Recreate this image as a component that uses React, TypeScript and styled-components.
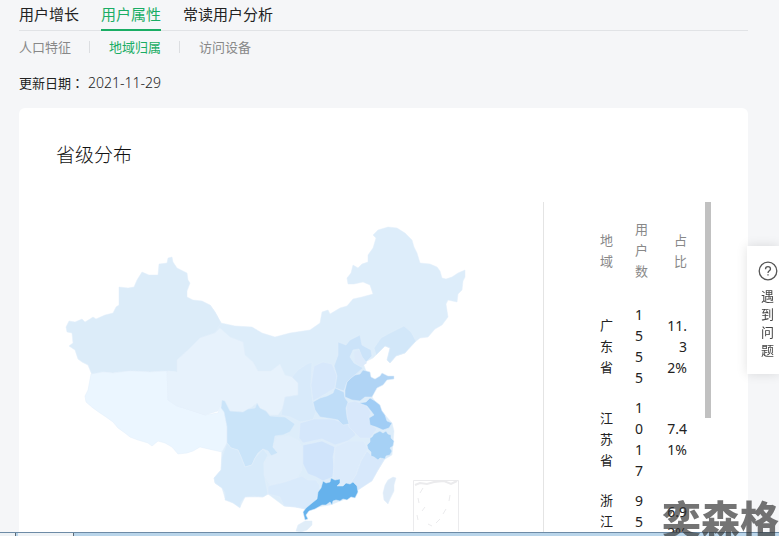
import React from "react";
import styled, { createGlobalStyle } from "styled-components";

const GlobalStyle = createGlobalStyle`
  * { box-sizing: border-box; }
  body {
    margin: 0;
    background: #f5f6f8;
    color: #353535;
    font-family: "Noto Sans", "Noto Sans CJK SC", sans-serif;
    font-weight: 400;
    font-size: 13px;
  }
`;

const Page = styled.div`
  display: flex;
  flex-direction: column;
  height: 100vh;
  overflow: hidden;
`;

const Content = styled.main`
  display: flex;
  flex-direction: column;
  flex: 1;
  min-height: 0;
  overflow: hidden;
  padding: 0 31px 0 19px;
`;

const Tabs = styled.nav`
  display: flex;
  flex: none;
  gap: 22px;
  height: 31px;
  box-shadow: inset 0 -1px #e1e3e6;
`;

const Tab = styled.a<{ $active?: boolean }>`
  height: 31px;
  line-height: 28px;
  font-size: 15px;
  text-decoration: none;
  white-space: nowrap;
  color: ${(p) => (p.$active ? "#1aad64" : "#222")};
  border-bottom: 2px solid ${(p) => (p.$active ? "#1aad64" : "transparent")};
`;

const SubTabs = styled.nav`
  display: flex;
  flex: none;
  align-items: center;
  height: 32px;
`;

const SubTab = styled.a<{ $active?: boolean }>`
  line-height: 20px;
  text-decoration: none;
  white-space: nowrap;
  color: ${(p) => (p.$active ? "#1aad64" : "#888")};
`;

const SubDivider = styled.span`
  width: 1px;
  height: 12px;
  margin: 0 19px 0 18px;
  background: #dcdee1;
`;

const Updated = styled.p`
  display: flex;
  flex: none;
  align-items: center;
  height: 38px;
  margin: 0 0 7px;
  color: #222;
`;

const UpdatedLabel = styled.span`
  width: 69px;
  font-family: "Noto Sans CJK TC", sans-serif;
`;

const UpdatedDate = styled.time`
  font-size: 14px;
  font-weight: 300;
`;

const Card = styled.section`
  display: flex;
  flex-direction: column;
  flex: 1;
  min-height: 0;
  padding: 33px 37px 0;
  border-radius: 6px 6px 0 0;
  background: #fff;
`;

const Title = styled.h2`
  flex: none;
  margin: 0 0 33px;
  font-size: 19px;
  font-weight: 300;
  line-height: 28px;
  color: #111;
`;

const Split = styled.div`
  display: flex;
  flex: 1;
  min-height: 0;
`;

const MapPane = styled.div`
  flex: 1;
  min-width: 0;
`;

const MapSvg = styled.svg`
  display: block;
  width: 100%;
`;

const ListPane = styled.div`
  display: flex;
  flex: none;
  justify-content: space-between;
  width: 168px;
  padding-left: 56px;
  overflow: hidden;
  border-left: 1px solid #e4e4e4;
`;

const RegionTable = styled.table`
  table-layout: fixed;
  align-self: flex-start;
  width: 87px;
  border-collapse: collapse;
  line-height: 21px;
  color: #222;
`;

const HeadCell = styled.th<{ $right?: boolean }>`
  padding: 17px 0 18px;
  font-weight: 400;
  color: #888;
  text-align: ${(p) => (p.$right ? "right" : "left")};
`;

const Cell = styled.td<{ $right?: boolean; $number?: boolean }>`
  padding: 4px 0 5px;
  font-size: ${(p) => (p.$number ? "14px" : "13px")};
  text-align: ${(p) => (p.$right ? "right" : "left")};
`;

const Column = styled.col<{ $width: number }>`
  width: ${(p) => p.$width}px;
`;

const ScrollThumb = styled.div`
  width: 6px;
  height: 216px;
  background: #c1c1c1;
`;

const Help = styled.button`
  position: fixed;
  top: 246px;
  right: 0;
  display: flex;
  flex-direction: column;
  align-items: center;
  width: 32px;
  height: 128px;
  padding: 15px 0 0 9px;
  border: 0;
  background: #fff;
  box-shadow: 0 0 12px rgba(0, 0, 0, 0.12);
  color: #444;
  font: inherit;
  line-height: 18px;
`;

const HelpIcon = styled.svg`
  flex: none;
  width: 20px;
  height: 20px;
  margin-bottom: 6px;
`;

const HelpText = styled.span`
  width: 13px;
`;

const Watermark = styled.div`
  position: fixed;
  right: 0;
  bottom: 0;
  height: 38px;
  line-height: 38px;
  font-family: "Noto Sans CJK SC", sans-serif;
  font-size: 39px;
  font-weight: 900;
  color: #333;
  opacity: 0.68;
  white-space: nowrap;
  pointer-events: none;
`;

const Taskbar = styled.footer`
  display: flex;
  flex: none;
  gap: 2px;
  height: 4px;
  border-top: 1px solid #6d8ba6;
  background: #b9d5ea;
`;

const TaskItem = styled.span<{ $width: number }>`
  width: ${(p) => p.$width}px;
  border: solid #5d6a75;
  border-width: 0 1px 0 0;
  background: #eef2f5;
`;

type Region = { name: string; fill: string; points: string };

const regions: Region[] = [
  { name: "mainland", fill: "#ddedfa", points: "210,305 215,312 221,323 235,326 252,327 262,333 275,337 290,333 310,330 320,323 322,312 328,310 330,314 340,308 347,306 353,299 362,297 373,294 370,285 363,282 354,284 348,284 347,278 351,273 353,265 358,268 362,264 368,262 368,255 373,248 376,238 373,235 378,230 388,227 397,228 405,233 412,240 414,247 417,253 420,263 430,264 437,267 440,271 442,278 446,279 452,277 458,273 465,270 465,277 463,281 462,290 458,294 457,302 448,300 446,304 448,317 442,325 435,329 428,337 420,338 410,346 405,353 396,356 390,363 387,360 390,348 385,346 373,358 363,363 366,371 371,377 372,397 385,415 392,423 394,431 392,455 385,459 378,470 372,480 358,490 343,500 330,505 305,509 295,507 284,506 268,494 263,497 245,497 240,507 225,498 222,488 215,483 214,478 221,470 222,447 225,400 177,372 177,360 188,335" },
  { name: "xinjiang", fill: "#dcecf9", points: "67,332 66,327 69,321 75,322 82,319 85,322 90,319 93,317 96,319 105,315 113,313 116,307 119,305 119,287 128,288 134,287 137,280 142,272 149,275 158,275 159,264 167,263 168,258 172,257 173,262 177,268 187,273 188,280 190,283 187,291 187,297 193,300 202,301 210,305 215,312 221,323 215,333 200,338 188,350 177,360 177,372 168,371 150,372 130,371 113,373 103,372 92,375 88,365 82,362 78,359 75,350 69,346 73,343 72,333" },
  { name: "tibet", fill: "#ebf6ff", points: "91,374 103,372 113,373 130,371 150,372 167,371 168,400 177,406 190,410 205,415 218,413 222,402 227,417 227,443 222,452 213,450 200,447 193,451 187,453 178,454 172,447 165,443 158,441 152,446 148,443 138,440 130,437 125,433 118,428 113,422 106,417 100,413 93,408 86,402 85,396 88,390" },
  { name: "qinghai-gansu", fill: "#e7f2fc", points: "177,372 177,360 188,350 200,338 215,333 220,328 230,337 243,342 245,355 253,362 258,371 271,371 280,364 285,375 292,377 298,383 298,395 285,397 283,408 278,415 270,415 265,410 260,409 257,403 252,407 243,412 230,411 222,402 218,411 205,415 190,410 177,406 168,400 167,371" },
  { name: "ningxia-shaanxi", fill: "#d8eafa", points: "298,370 307,364 312,362 311,385 313,402 316,412 313,420 300,422 290,417 281,415 285,397 298,395 298,383 292,377" },
  { name: "shanxi", fill: "#d7e8fb", points: "314,366 323,362 332,364 337,376 335,388 327,393 313,401 311,385" },
  { name: "hebei", fill: "#cbe3f9", points: "338,342 346,345 350,340 360,335 362,345 371,350 372,356 366,362 362,357 359,349 353,350 350,357 354,363 363,368 355,375 347,382 344,391 335,388 337,376 334,366 338,355" },
  { name: "liaoning", fill: "#d2e7f9", points: "374,348 381,338 388,334 398,329 404,326 411,332 416,341 405,353 396,356 390,363 387,360 390,348 385,346 376,355" },
  { name: "sichuan", fill: "#cae4f9", points: "222,400 225,401 230,411 243,412 248,409 255,408 257,403 260,408 266,411 270,416 285,417 295,424 290,432 283,435 275,436 273,447 278,453 272,457 268,451 263,449 258,453 255,458 252,465 245,467 241,457 238,450 231,448 227,443 227,427 224,412 221,408" },
  { name: "yunnan", fill: "#d7eafa", points: "227,443 231,448 238,450 241,457 245,467 252,465 255,458 263,449 268,455 264,463 265,479 268,494 263,497 254,496 245,497 241,502 240,508 233,503 225,500 225,493 222,488 215,483 214,478 221,470 222,457" },
  { name: "guizhou", fill: "#e0eefb", points: "268,457 278,453 273,447 277,437 289,436 299,441 302,448 302,470 297,478 285,482 270,485 264,475 264,463" },
  { name: "guangxi", fill: "#d9eafb", points: "268,486 285,482 302,476 308,480 316,480 320,486 318,498 306,509 295,507 284,506 280,497 268,494" },
  { name: "hubei", fill: "#d5e7fb", points: "299,438 300,423 314,419 333,419 349,425 356,435 348,441 335,445 322,439 303,443" },
  { name: "hunan", fill: "#d0e4fb", points: "303,445 313,443 322,441 335,447 333,457 334,467 333,477 323,481 316,477 308,474 303,464" },
  { name: "jiangxi", fill: "#dcebfb", points: "335,447 348,441 364,441 368,449 361,461 356,475 350,484 338,484 333,477" },
  { name: "fujian", fill: "#d7e8fb", points: "367,451 372,456 380,459 385,458 378,470 372,481 358,490 350,484 356,475 361,461" },
  { name: "anhui", fill: "#d8e8fb", points: "346,403 355,401 367,406 371,413 369,418 372,425 377,429 370,438 360,438 349,427 347,417" },
  { name: "henan", fill: "#bfddf8", points: "313,402 320,398 327,396 333,393 335,388 344,392 345,398 348,402 346,408 347,417 349,424 343,425 338,420 333,419 320,417 315,410" },
  { name: "shandong", fill: "#b0d4f5", points: "345,397 345,390 347,382 351,378 355,375 360,374 363,370 370,372 371,377 375,379 380,376 382,373 388,376 394,376 394,379 387,380 383,385 377,388 372,397 365,397 360,401 352,400" },
  { name: "jiangsu", fill: "#a1cdf5", points: "359,403 366,402 370,398 375,401 380,405 382,411 385,415 387,421 392,423 389,428 383,430 376,427 370,425 369,418 374,415 371,411 367,406" },
  { name: "zhejiang", fill: "#a6d1f5", points: "372,437 374,434 376,433 380,431 383,433 386,431 388,434 391,435 391,438 394,441 393,446 390,448 392,451 390,455 386,456 385,459 380,458 378,460 374,457 371,456 371,452 368,449 367,445 370,442 370,438" },
  { name: "guangdong", fill: "#66b2ec", points: "323,481 326,483 330,482 331,478 335,480 340,479 340,483 337,486 343,486 346,483 350,484 353,482 357,486 358,492 355,498 351,497 347,500 343,499 340,501 336,500 333,501 332,505 330,502 326,505 322,505 315,509 309,511 306,515 308,519 305,520 304,516 303,512 306,508 312,503 317,499 318,492 321,488" },
  { name: "taiwan", fill: "#deebf8", points: "388,480 393,477 396,478 394,485 394,491 390,499 388,504 384,500 383,493 385,485" },
  { name: "hainan", fill: "#e0edf8", points: "298,525 305,521 312,521 312,525 307,530 301,532 296,531" },
];

const rows = [
  { region: "广东省", users: "1555", share: ["11.", "3", "2%"] },
  { region: "江苏省", users: "1017", share: ["7.4", "1%"] },
  { region: "浙江省", users: "951", share: ["6.9", "2%"] },
];

const Lines = ({ parts }: { parts: string[] }) => (
  <>
    {parts.map((part, i) => (
      <React.Fragment key={i}>
        {i > 0 && <br />}
        {part}
      </React.Fragment>
    ))}
  </>
);

const ChinaMap = () => (
  <MapSvg viewBox="56 202 487 334" role="img" aria-label="省级分布">
    {regions.map((r) => (
      <polygon key={r.name} points={r.points} fill={r.fill} stroke="#e2effb" strokeWidth="0.5" strokeLinejoin="round" />
    ))}
    <polygon points="354,352 359,350 363,358 367,363 361,367 355,362" fill="#dceafa" />
    <g fill="none" stroke="#ebebed">
      <path d="M413.500 531V480.500H458.500V531" />
      <path d="M415 485l5-2 7 1 7-2 10-1 7 3 6-3" strokeWidth="2" />
      <path d="M423 488l-3 5M418 498l1 5M425 507l-3 4M450 495l-1 6M446 509l-3 5M440 519l-4 4M428 524l4 2M417 515l1 5" />
    </g>
  </MapSvg>
);

export default function App() {
  return (
    <Page>
      <GlobalStyle />
      <Content>
        <Tabs>
          <Tab href="#growth">用户增长</Tab>
          <Tab href="#attributes" $active>用户属性</Tab>
          <Tab href="#readers">常读用户分析</Tab>
        </Tabs>
        <SubTabs>
          <SubTab href="#population">人口特征</SubTab>
          <SubDivider />
          <SubTab href="#region" $active>地域归属</SubTab>
          <SubDivider />
          <SubTab href="#device">访问设备</SubTab>
        </SubTabs>
        <Updated>
          <UpdatedLabel>更新日期：</UpdatedLabel>
          <UpdatedDate>2021-11-29</UpdatedDate>
        </Updated>
        <Card>
          <Title>省级分布</Title>
          <Split>
            <MapPane>
              <ChinaMap />
            </MapPane>
            <ListPane>
              <RegionTable>
                <colgroup>
                  <Column $width={35} />
                  <Column $width={14} />
                  <Column $width={38} />
                </colgroup>
                <thead>
                  <tr>
                    <HeadCell><Lines parts={[..."地域"]} /></HeadCell>
                    <HeadCell><Lines parts={[..."用户数"]} /></HeadCell>
                    <HeadCell $right><Lines parts={[..."占比"]} /></HeadCell>
                  </tr>
                </thead>
                <tbody>
                  {rows.map((row) => (
                    <tr key={row.region}>
                      <Cell><Lines parts={[...row.region]} /></Cell>
                      <Cell $number><Lines parts={[...row.users]} /></Cell>
                      <Cell $right $number><Lines parts={row.share} /></Cell>
                    </tr>
                  ))}
                </tbody>
              </RegionTable>
              <ScrollThumb />
            </ListPane>
          </Split>
        </Card>
      </Content>
      <Taskbar>
        <TaskItem $width={16} />
        <TaskItem $width={56} />
      </Taskbar>
      <Help type="button">
        <HelpIcon viewBox="0 0 20 20" fill="none" stroke="#555" strokeWidth="1.300" aria-hidden="true">
          <circle cx="10" cy="10" r="8.800" />
          <path d="M7.500 8.200C7.500 6.600 8.500 5.700 10 5.700S12.500 6.600 12.500 8C12.500 9.800 10 9.900 10 12M10 13.200V14.600" />
        </HelpIcon>
        <HelpText>遇到问题</HelpText>
      </Help>
      <Watermark>奕森格</Watermark>
    </Page>
  );
}
